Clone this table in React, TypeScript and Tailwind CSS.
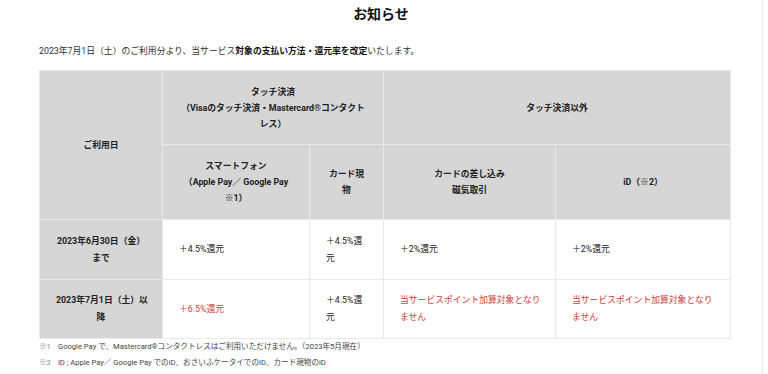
import React from "react";

export default function App() {
  const th = "border border-[#e9e9e9] bg-[#d6d6d6] font-bold text-center align-middle px-4 leading-[16px] whitespace-nowrap";
  const td = "border border-[#e9e9e9] bg-white text-left align-middle px-4 leading-[17px] whitespace-nowrap";
  const red = "text-[#d0403a]";
  return (
    <div
      className="w-[763px] h-[374px] border-r border-[#eeeeee] bg-white text-[#222] overflow-hidden"
      style={{ fontFamily: 'Roboto, "Noto Sans CJK JP", sans-serif' }}
    >
      <div className="pt-[4px] text-center text-[14px] font-bold leading-[20px] text-[#111]">お知らせ</div>
      <div className="mt-[21px] pl-[39px] text-[8.8px] leading-[12px] text-[#333]">
        2023年7月1日（土）のご利用分より、当サービス<span className="font-bold text-[#111]">対象の支払い方法・還元率を改定</span>いたします。
      </div>
      <table className="mt-[13px] ml-[39px] w-[691px] table-fixed border-collapse text-[8.8px] text-[#222]">
        <colgroup>
          <col className="w-[123px]" />
          <col className="w-[147px]" />
          <col className="w-[74px]" />
          <col className="w-[172px]" />
          <col className="w-[175px]" />
        </colgroup>
        <tbody>
          <tr className="h-[74px]">
            <th rowSpan={2} className={th}>ご利用日</th>
            <th colSpan={2} className={th}>
              タッチ決済
              <br />
              （Visaのタッチ決済・Mastercard®コンタクト
              <br />
              レス）
            </th>
            <th colSpan={2} className={th}>タッチ決済以外</th>
          </tr>
          <tr className="h-[75px]">
            <th className={th}>
              スマートフォン
              <br />
              （Apple Pay／ Google Pay
              <br />
              ※1）
            </th>
            <th className={th}>
              カード現
              <br />
              物
            </th>
            <th className={th}>
              カードの差し込み
              <br />
              磁気取引
            </th>
            <th className={th}>iD（※2）</th>
          </tr>
          <tr className="h-[60px]">
            <th className={th + " leading-[17px]"}>
              2023年6月30日（金）
              <br />
              まで
            </th>
            <td className={td}>＋4.5%還元</td>
            <td className={td}>
              ＋4.5%還
              <br />
              元
            </td>
            <td className={td}>＋2%還元</td>
            <td className={td}>＋2%還元</td>
          </tr>
          <tr className="h-[59px]">
            <th className={th + " leading-[17px]"}>
              2023年7月1日（土）以
              <br />
              降
            </th>
            <td className={td + " " + red}>＋6.5%還元</td>
            <td className={td}>
              ＋4.5%還
              <br />
              元
            </td>
            <td className={td + " " + red}>
              当サービスポイント加算対象となり
              <br />
              ません
            </td>
            <td className={td + " " + red}>
              当サービスポイント加算対象となり
              <br />
              ません
            </td>
          </tr>
        </tbody>
      </table>
      <div className="mt-[0px] pl-[39px] text-[7.6px] leading-[16px] text-[#444]">
        <div className="flex">
          <span className="w-[19px] text-[#888]">※1</span>
          <span>Google Pay で、Mastercard®コンタクトレスはご利用いただけません。（2023年5月現在）</span>
        </div>
        <div className="flex">
          <span className="w-[19px] text-[#888]">※2</span>
          <span>iD ; Apple Pay／ Google Pay でのiD、おさいふケータイでのiD、カード現物のiD</span>
        </div>
      </div>
    </div>
  );
}
